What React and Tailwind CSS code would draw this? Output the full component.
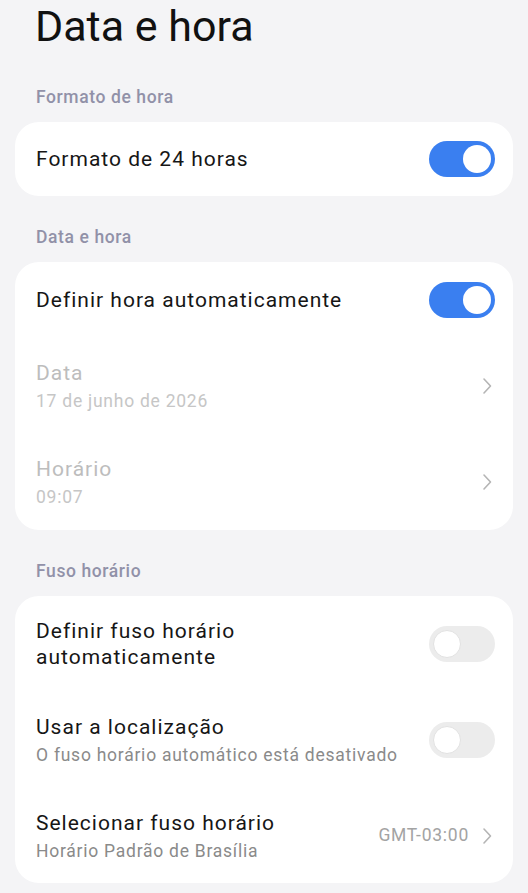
const Toggle = ({ on }) => (
    <div
        className={`w-[66px] h-[36px] rounded-full flex items-center px-[4px] shrink-0 ${
            on ? "bg-[#3a7ff0] justify-end" : "bg-[#ececec] justify-start"
        }`}
    >
        <div
            className={`w-[28px] h-[28px] rounded-full bg-white ${
                on ? "" : "border border-[#e2e2e2]"
            }`}
        />
    </div>
);

const Chevron = () => (
    <svg width="10" height="18" viewBox="0 0 10 18" className="shrink-0">
        <path
            d="M2 2 L8.5 9 L2 16"
            fill="none"
            stroke="#b5b5b5"
            strokeWidth="1.6"
            strokeLinecap="round"
            strokeLinejoin="round"
        />
    </svg>
);

const SectionLabel = ({ children, top }) => (
    <div
        className={`px-[36px] ${top} pb-[15px] text-[17.5px] leading-[20px] tracking-[0.6px] font-medium text-[#9191a8]`}
    >
        {children}
    </div>
);

const Card = ({ children }) => (
    <div className="mx-[15px] bg-white rounded-[24px] overflow-hidden">
        {children}
    </div>
);

const Row = ({ height, title, subtitle, disabled, right }) => (
    <div
        className={`flex items-center justify-between pl-[21px] pr-[18px] ${height}`}
    >
        <div className="flex flex-col">
            {title.map((line) => (
                <div
                    key={line}
                    className={`text-[21px] leading-[26px] tracking-[1px] ${
                        disabled ? "text-[#bdbdbd]" : "text-[#161616]"
                    }`}
                >
                    {line}
                </div>
            ))}
            {subtitle && (
                <div
                    className={`text-[17.5px] leading-[22px] tracking-[0.75px] mt-[4px] ${
                        disabled ? "text-[#c6c6c6]" : "text-[#8a8a8a]"
                    }`}
                >
                    {subtitle}
                </div>
            )}
        </div>
        {right}
    </div>
);

export default function App() {
    return (
        <div className="min-h-[893px] bg-[#f4f4f6] font-['Roboto',sans-serif] pb-[11px]">
            <div className="h-[65px] px-[35px] text-[43px] leading-[52px] text-[#111]">
                Data e hora
            </div>

            <SectionLabel top="pt-[22px]">Formato de hora</SectionLabel>
            <Card>
                <Row
                    height="h-[74px]"
                    title={["Formato de 24 horas"]}
                    right={<Toggle on />}
                />
            </Card>

            <SectionLabel top="pt-[31px]">Data e hora</SectionLabel>
            <Card>
                <Row
                    height="h-[76px]"
                    title={["Definir hora automaticamente"]}
                    right={<Toggle on />}
                />
                <Row
                    height="h-[96px]"
                    title={["Data"]}
                    subtitle="17 de junho de 2026"
                    disabled
                    right={
                        <div className="pr-[3px]">
                            <Chevron />
                        </div>
                    }
                />
                <Row
                    height="h-[96px]"
                    title={["Horário"]}
                    subtitle="09:07"
                    disabled
                    right={
                        <div className="pr-[3px]">
                            <Chevron />
                        </div>
                    }
                />
            </Card>

            <SectionLabel top="pt-[31px]">Fuso horário</SectionLabel>
            <Card>
                <Row
                    height="h-[96px]"
                    title={["Definir fuso horário", "automaticamente"]}
                    right={<Toggle />}
                />
                <Row
                    height="h-[96px]"
                    title={["Usar a localização"]}
                    subtitle="O fuso horário automático está desativado"
                    right={<Toggle />}
                />
                <Row
                    height="h-[95px]"
                    title={["Selecionar fuso horário"]}
                    subtitle="Horário Padrão de Brasília"
                    right={
                        <div className="flex items-center gap-[13px] pr-[3px]">
                            <span className="text-[17.5px] tracking-[0.75px] text-[#a3a3a3]">
                                GMT-03:00
                            </span>
                            <Chevron />
                        </div>
                    }
                />
            </Card>
        </div>
    );
}
